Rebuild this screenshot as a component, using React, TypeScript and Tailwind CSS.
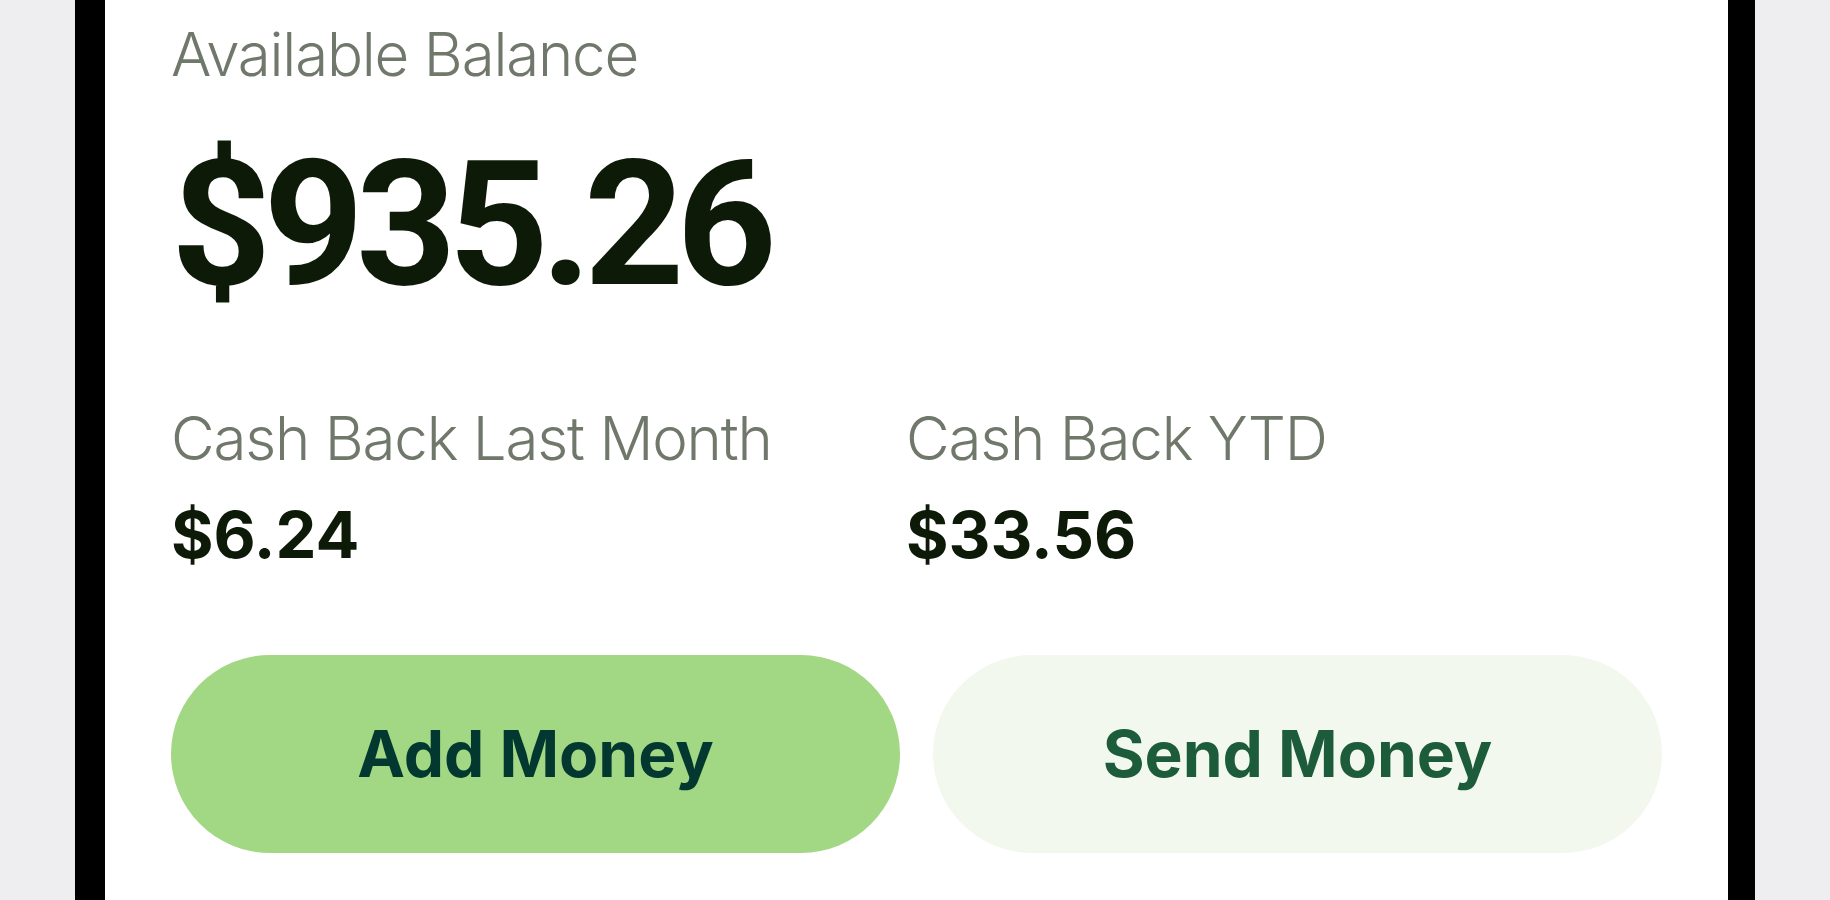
import React from "react";

export default function App() {
  return (
    <div className="flex h-[900px] w-[1830px] overflow-hidden bg-[#eeeef0] font-['Inter',sans-serif]">
      <div className="w-[75px] shrink-0" />
      <div className="w-[30px] shrink-0 bg-black" />
      <div className="flex w-[1623px] shrink-0 flex-col bg-white px-[66px] pt-[18px]">
        <div className="text-[60px] font-light leading-[72px] tracking-[-0.02em] text-[#6f786b]">Available Balance</div>
        <div className="mt-[47px] font-['Roboto',sans-serif] text-[175px] font-bold leading-[175px] tracking-[-0.045em] text-[#0d1a07]">
          $935.26
        </div>
        <div className="mt-[90px] grid grid-cols-[735px_1fr]">
          <div className="flex flex-col">
            <div className="text-[60px] font-light leading-[72px] tracking-[-0.02em] text-[#6f786b]">Cash Back Last Month</div>
            <div className="mt-[29px] text-[65px] font-bold leading-[64px] text-[#0d1a07]">$6.24</div>
          </div>
          <div className="flex flex-col">
            <div className="text-[60px] font-light leading-[72px] tracking-[-0.02em] text-[#6f786b]">Cash Back YTD</div>
            <div className="mt-[29px] text-[65px] font-bold leading-[64px] text-[#0d1a07]">$33.56</div>
          </div>
        </div>
        <div className="mt-[88px] flex gap-[33px]">
          <button className="flex h-[198px] flex-1 items-center justify-center rounded-full bg-[#a2d784] text-[64px] font-bold text-[#02382f]">
            Add Money
          </button>
          <button className="flex h-[198px] flex-1 items-center justify-center rounded-full bg-[#f3f8ee] text-[64px] font-bold text-[#1d5c3b]">
            Send Money
          </button>
        </div>
      </div>
      <div className="w-[27px] shrink-0 bg-black" />
      <div className="flex-1" />
    </div>
  );
}
